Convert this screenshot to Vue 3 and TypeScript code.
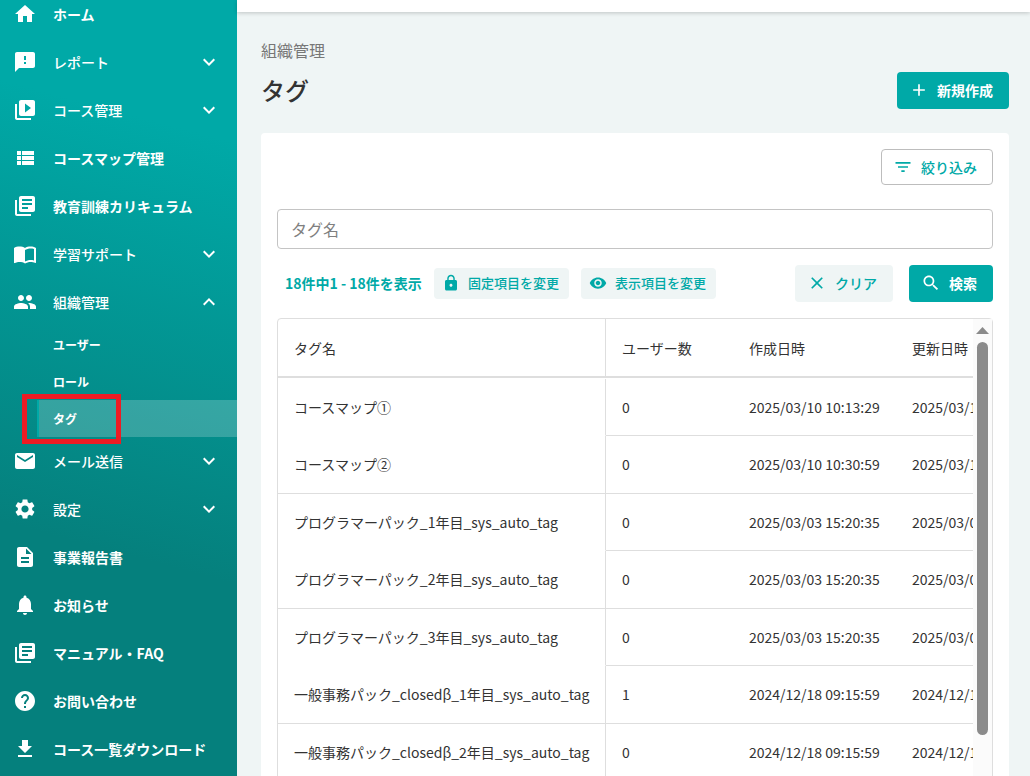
<script setup lang="ts">
interface NavItem {
  label: string
  icon: string
  state?: 'closed' | 'open'
  children?: string[]
}

const icons: Record<string, string> = {
  home: 'M10 20v-6h4v6h5v-8h3L12 3 2 12h3v8z',
  report: 'M20 2H4c-1.1 0-2 .9-2 2v18l4-4h14c1.1 0 2-.9 2-2V4c0-1.1-.9-2-2-2zm-7 12h-2v-2h2v2zm0-4h-2V6h2v4z',
  video: 'M4 6H2v14c0 1.1.9 2 2 2h14v-2H4V6zm16-4H8c-1.1 0-2 .9-2 2v12c0 1.1.9 2 2 2h12c1.1 0 2-.9 2-2V4c0-1.1-.9-2-2-2zm-8 12.5v-9l6 4.5-6 4.5z',
  list: 'M4 14h4v-4H4v4zm0 5h4v-4H4v4zM4 9h4V5H4v4zm5 5h12v-4H9v4zm0 5h12v-4H9v4zM9 5v4h12V5H9z',
  library: 'M4 6H2v14c0 1.1.9 2 2 2h14v-2H4V6zm16-4H8c-1.1 0-2 .9-2 2v12c0 1.1.9 2 2 2h12c1.1 0 2-.9 2-2V4c0-1.1-.9-2-2-2zm-1 9H9V9h10v2zm-4 4H9v-2h6v2zm4-8H9V5h10v2z',
  book: 'M21 5c-1.11-.35-2.33-.5-3.5-.5-1.95 0-4.05.4-5.5 1.5-1.45-1.1-3.55-1.5-5.5-1.5S2.45 4.9 1 6v14.65c0 .25.25.5.5.5.1 0 .15-.05.25-.05C3.1 20.45 5.05 20 6.5 20c1.95 0 4.05.4 5.5 1.5 1.35-.85 3.8-1.5 5.5-1.5 1.65 0 3.35.3 4.75 1.05.1.05.15.05.25.05.25 0 .5-.25.5-.5V6c-.6-.45-1.25-.75-2-1zm0 13.5c-1.1-.35-2.3-.5-3.5-.5-1.7 0-4.15.65-5.5 1.5V8c1.35-.85 3.8-1.5 5.5-1.5 1.2 0 2.4.15 3.5.5v11.5z',
  people: 'M16 11c1.66 0 2.99-1.34 2.99-3S17.66 5 16 5c-1.66 0-3 1.34-3 3s1.34 3 3 3zm-8 0c1.66 0 2.99-1.34 2.99-3S9.66 5 8 5C6.34 5 5 6.34 5 8s1.34 3 3 3zm0 2c-2.33 0-7 1.17-7 3.5V19h14v-2.5c0-2.33-4.67-3.5-7-3.5zm8 0c-.29 0-.62.02-.97.05 1.16.84 1.97 1.97 1.97 3.45V19h6v-2.5c0-2.33-4.67-3.5-7-3.5z',
  mail: 'M20 4H4c-1.1 0-1.99.9-1.99 2L2 18c0 1.1.9 2 2 2h16c1.1 0 2-.9 2-2V6c0-1.1-.9-2-2-2zm0 4l-8 5-8-5V6l8 5 8-5v2z',
  settings: 'M19.14 12.94c.04-.3.06-.61.06-.94 0-.32-.02-.64-.07-.94l2.03-1.58c.18-.14.23-.41.12-.61l-1.92-3.32c-.12-.22-.37-.29-.59-.22l-2.39.96c-.5-.38-1.03-.7-1.62-.94l-.36-2.54c-.04-.24-.24-.41-.48-.41h-3.84c-.24 0-.43.17-.47.41l-.36 2.54c-.59.24-1.13.57-1.62.94l-2.39-.96c-.22-.08-.47 0-.59.22L2.74 8.87c-.12.21-.08.47.12.61l2.03 1.58c-.05.3-.09.63-.09.94s.02.64.07.94l-2.03 1.58c-.18.14-.23.41-.12.61l1.92 3.32c.12.22.37.29.59.22l2.39-.96c.5.38 1.03.7 1.62.94l.36 2.54c.05.24.24.41.48.41h3.84c.24 0 .44-.17.47-.41l.36-2.54c.59-.24 1.13-.56 1.62-.94l2.39.96c.22.08.47 0 .59-.22l1.92-3.32c.12-.22.07-.47-.12-.61l-2.01-1.58zM12 15.6c-1.98 0-3.6-1.62-3.6-3.6s1.62-3.6 3.6-3.6 3.6 1.62 3.6 3.6-1.62 3.6-3.6 3.6z',
  doc: 'M14 2H6c-1.1 0-1.99.9-1.99 2L4 20c0 1.1.89 2 1.99 2H18c1.1 0 2-.9 2-2V8l-6-6zm2 16H8v-2h8v2zm0-4H8v-2h8v2zm-3-5V3.500L18.500 9H13z',
  bell: 'M12 22c1.100 0 2-.9 2-2h-4c0 1.100.89 2 2 2zm6-6v-5c0-3.070-1.640-5.640-4.500-6.320V4c0-.83-.67-1.500-1.500-1.500s-1.500.67-1.500 1.500v.68C7.630 5.360 6 7.920 6 11v5l-2 2v1h16v-1l-2-2z',
  help: 'M12 2C6.480 2 2 6.480 2 12s4.480 10 10 10 10-4.480 10-10S17.520 2 12 2zm1 17h-2v-2h2v2zm2.070-7.750l-.9.92C13.450 12.900 13 13.500 13 15h-2v-.5c0-1.100.45-2.100 1.170-2.830l1.240-1.260c.37-.36.59-.86.59-1.410 0-1.100-.9-2-2-2s-2 .9-2 2H8c0-2.210 1.790-4 4-4s4 1.790 4 4c0 .88-.36 1.680-.93 2.250z',
  download: 'M19 9h-4V3H9v6H5l7 7 7-7zM5 18v2h14v-2H5z',
  add: 'M19 13h-6v6h-2v-6H5v-2h6V5h2v6h6v2z',
  filter: 'M10 18h4v-2h-4v2zM3 6v2h18V6H3zm3 7h12v-2H6v2z',
  lock: 'M18 8h-1V6c0-2.760-2.240-5-5-5S7 3.240 7 6v2H6c-1.100 0-2 .9-2 2v10c0 1.100.9 2 2 2h12c1.100 0 2-.9 2-2V10c0-1.100-.9-2-2-2zm-6 9c-1.100 0-2-.9-2-2s.9-2 2-2 2 .9 2 2-.9 2-2 2zm3.100-9H8.900V6c0-1.710 1.390-3.100 3.100-3.100 1.710 0 3.100 1.390 3.100 3.100v2z',
  eye: 'M12 4.500C7 4.500 2.730 7.610 1 12c1.730 4.390 6 7.500 11 7.500s9.270-3.110 11-7.500c-1.730-4.390-6-7.500-11-7.500zM12 17c-2.760 0-5-2.240-5-5s2.240-5 5-5 5 2.240 5 5-2.240 5-5 5zm0-8c-1.660 0-3 1.340-3 3s1.340 3 3 3 3-1.340 3-3-1.340-3-3-3z',
  close: 'M19 6.410L17.590 5 12 10.590 6.410 5 5 6.410 10.590 12 5 17.590 6.410 19 12 13.410 17.590 19 19 17.590 13.410 12z',
  search: 'M15.500 14h-.79l-.28-.27C15.410 12.590 16 11.110 16 9.500 16 5.910 13.090 3 9.500 3S3 5.910 3 9.500 5.910 16 9.500 16c1.610 0 3.090-.59 4.230-1.570l.27.28v.79l5 4.990L20.490 19l-4.990-5zm-6 0C7.010 14 5 11.990 5 9.500S7.010 5 9.500 5 14 7.010 14 9.500 11.990 14 9.500 14z',
  down: 'M16.590 8.590L12 13.170 7.410 8.590 6 10l6 6 6-6z',
  up: 'M12 8l-6 6 1.410 1.410L12 10.830l4.590 4.580L18 14z',
}

const nav: NavItem[] = [
  { label: 'ホーム', icon: 'home' },
  { label: 'レポート', icon: 'report', state: 'closed' },
  { label: 'コース管理', icon: 'video', state: 'closed' },
  { label: 'コースマップ管理', icon: 'list' },
  { label: '教育訓練カリキュラム', icon: 'library' },
  { label: '学習サポート', icon: 'book', state: 'closed' },
  { label: '組織管理', icon: 'people', state: 'open', children: ['ユーザー', 'ロール', 'タグ'] },
  { label: 'メール送信', icon: 'mail', state: 'closed' },
  { label: '設定', icon: 'settings', state: 'closed' },
  { label: '事業報告書', icon: 'doc' },
  { label: 'お知らせ', icon: 'bell' },
  { label: 'マニュアル・FAQ', icon: 'library' },
  { label: 'お問い合わせ', icon: 'help' },
  { label: 'コース一覧ダウンロード', icon: 'download' },
]

const columns: string[] = ['タグ名', 'ユーザー数', '作成日時', '更新日時']

const rows: string[][] = [
  ['コースマップ①', '0', '2025/03/10 10:13:29', '2025/03/10 10:13:29'],
  ['コースマップ②', '0', '2025/03/10 10:30:59', '2025/03/10 10:30:59'],
  ['プログラマーパック_1年目_sys_auto_tag', '0', '2025/03/03 15:20:35', '2025/03/03 15:20:35'],
  ['プログラマーパック_2年目_sys_auto_tag', '0', '2025/03/03 15:20:35', '2025/03/03 15:20:35'],
  ['プログラマーパック_3年目_sys_auto_tag', '0', '2025/03/03 15:20:35', '2025/03/03 15:20:35'],
  ['一般事務パック_closedβ_1年目_sys_auto_tag', '1', '2024/12/18 09:15:59', '2024/12/18 09:15:59'],
  ['一般事務パック_closedβ_2年目_sys_auto_tag', '0', '2024/12/18 09:15:59', '2024/12/18 09:15:59'],
]
</script>

<template>
  <div class="app">
    <nav class="sidebar">
      <template v-for="item in nav" :key="item.label">
        <div class="nav-item" :class="{ group: item.state }">
          <svg class="nav-icon" viewBox="0 0 24 24"><path :d="icons[item.icon]" /></svg>
          <span class="nav-label">{{ item.label }}</span>
          <svg v-if="item.state" class="chevron" viewBox="0 0 24 24">
            <path :d="item.state === 'open' ? icons.up : icons.down" />
          </svg>
        </div>
        <div
          v-for="child in item.children ?? []"
          :key="child"
          class="sub-item"
          :class="{ active: child === 'タグ' }"
        >
          {{ child }}
          <span v-if="child === 'タグ'" class="highlight"></span>
        </div>
      </template>
    </nav>

    <main class="main">
      <header class="topbar"></header>
      <div class="content">
        <div class="crumb">組織管理</div>
        <div class="title-row">
          <h1>タグ</h1>
          <button class="btn primary create">
            <svg class="i20" viewBox="0 0 24 24"><path :d="icons.add" /></svg>新規作成
          </button>
        </div>

        <section class="card">
          <div class="filter-row">
            <button class="btn outline">
              <svg class="i20" viewBox="0 0 24 24"><path :d="icons.filter" /></svg>絞り込み
            </button>
          </div>
          <input class="field" type="text" placeholder="タグ名" />
          <div class="tools">
            <span class="count">18件中1 - 18件を表示</span>
            <button class="btn chip">
              <svg class="i18" viewBox="0 0 24 24"><path :d="icons.lock" /></svg>固定項目を変更
            </button>
            <button class="btn chip">
              <svg class="i18" viewBox="0 0 24 24"><path :d="icons.eye" /></svg>表示項目を変更
            </button>
            <button class="btn soft clear">
              <svg class="i20" viewBox="0 0 24 24"><path :d="icons.close" /></svg>クリア
            </button>
            <button class="btn primary search">
              <svg class="i20" viewBox="0 0 24 24"><path :d="icons.search" /></svg>検索
            </button>
          </div>

          <div class="table-box">
            <div class="table">
              <div class="tr head">
                <div v-for="col in columns" :key="col" class="cell">{{ col }}</div>
              </div>
              <div class="body">
                <div v-for="row in rows" :key="row[0]" class="tr">
                  <div v-for="(value, i) in row" :key="i" class="cell">{{ value }}</div>
                </div>
              </div>
            </div>
            <div class="scrollbar">
              <span class="arrow"></span>
              <span class="thumb"></span>
            </div>
          </div>
        </section>
      </div>
    </main>
  </div>
</template>

<style>
body {
  margin: 0;
  overflow: hidden;
}
</style>

<style scoped>
* {
  box-sizing: border-box;
}
.app {
  display: flex;
  width: 1030px;
  height: 776px;
  overflow: hidden;
  background: #eff5f5;
  color: #333;
  font-family: "Noto Sans CJK JP", "Noto Sans", sans-serif;
  font-size: 14px;
  line-height: 20px;
}
svg {
  display: block;
  flex: none;
  fill: currentColor;
}
.sidebar {
  flex: none;
  width: 237px;
  height: 786px;
  margin-top: -10px;
  color: #fff;
  background: linear-gradient(195deg, #00a9a7 18%, #05807d 70%);
}
.nav-item {
  display: flex;
  align-items: center;
  height: 48px;
  padding: 0 16px 0 13px;
  font-weight: 700;
}
.nav-item.group {
  font-weight: 500;
}
.nav-icon {
  width: 24px;
  height: 24px;
  margin-right: 16px;
}
.nav-label {
  flex: 1;
}
.chevron {
  width: 24px;
  height: 24px;
}
.sub-item {
  position: relative;
  display: flex;
  align-items: center;
  height: 37px;
  margin-left: 37px;
  padding-left: 16px;
  font-size: 12px;
  font-weight: 700;
}
.sub-item.active {
  padding-left: 14px;
  border-left: 2px solid #00a9a7;
  background: rgba(255, 255, 255, 0.2);
  background-clip: padding-box;
}
.highlight {
  position: absolute;
  left: -17px;
  top: -6px;
  width: 99px;
  height: 50px;
  border: 5px solid #ed1c24;
}
.main {
  flex: 1;
  min-width: 0;
}
.topbar {
  height: 12px;
  background: #fff;
  box-shadow: 0 1px 4px rgba(0, 0, 0, 0.2);
}
.content {
  padding: 27px 21px 0 24px;
}
.crumb {
  height: 24px;
  font-size: 16px;
  line-height: 22px;
  color: #777;
}
.title-row {
  display: flex;
  align-items: center;
  justify-content: space-between;
  height: 37px;
  margin-top: 9px;
}
h1 {
  margin: 0 0 2px;
  font-size: 24px;
  font-weight: 500;
  line-height: 36px;
}
.btn {
  display: flex;
  align-items: center;
  height: 37px;
  padding: 0 0 1px;
  border: 0;
  border-radius: 4px;
  font: inherit;
  font-weight: 500;
  color: #00a9a7;
  background: #eff5f5;
  white-space: nowrap;
}
.btn.primary {
  color: #fff;
  font-weight: 700;
  background: #00a9a7;
}
.i20 {
  width: 20px;
  height: 20px;
  margin-right: 8px;
}
.i18 {
  width: 18px;
  height: 18px;
  margin-right: 8px;
}
.create {
  width: 112px;
  padding-left: 12px;
}
.card {
  height: 700px;
  margin-top: 24px;
  padding: 16px;
  border-radius: 4px;
  background: #fff;
}
.filter-row {
  display: flex;
  justify-content: flex-end;
}
.btn.outline {
  width: 112px;
  height: 36px;
  padding: 0 0 0 11px;
  border: 1px solid #bdbdbd;
  background: #fff;
}
.field {
  display: block;
  width: 100%;
  height: 40px;
  margin-top: 24px;
  padding: 0 13px;
  border: 1px solid #c4c4c4;
  border-radius: 4px;
  background: #fff;
  font: inherit;
  font-size: 16px;
}
.field::placeholder {
  color: #808080;
  opacity: 1;
}
.tools {
  display: flex;
  align-items: center;
  height: 37px;
  margin-top: 16px;
}
.count {
  width: 149px;
  margin-left: 8px;
  padding-bottom: 1px;
  color: #00a9a7;
  font-weight: 700;
  white-space: nowrap;
}
.chip {
  width: 135px;
  height: 31px;
  margin-right: 12px;
  padding-left: 8px;
  font-size: 13px;
}
.clear {
  width: 98px;
  margin-left: auto;
  padding-left: 12px;
}
.search {
  width: 84px;
  margin-left: 16px;
  padding-left: 12px;
}
.table-box {
  display: flex;
  height: 520px;
  margin-top: 16px;
  border: 1px solid #dedede;
  border-radius: 4px;
}
.table {
  flex: 1;
  min-width: 0;
  overflow: hidden;
}
.tr {
  display: grid;
  grid-template-columns: 328px 127px 163px 163px;
  height: 57.5px;
}
.cell {
  display: flex;
  align-items: center;
  padding: 0 16px;
  border-bottom: 1px solid #dedede;
  white-space: nowrap;
}
.cell:first-child {
  border-right: 1px solid #dedede;
}
.head {
  height: 59px;
}
.head .cell {
  border-bottom-width: 2px;
}
.body {
  padding-top: 0.5px;
}
.body .tr:nth-child(odd) .cell:first-child {
  border-bottom-color: transparent;
}
.scrollbar {
  display: flex;
  flex-direction: column;
  align-items: center;
  flex: none;
  width: 19px;
  padding-top: 8px;
  background: #fbfbfb;
}
.arrow {
  width: 13px;
  height: 7px;
  background: #8b8b8b;
  clip-path: polygon(50% 0, 100% 100%, 0 100%);
}
.thumb {
  width: 11px;
  height: 393px;
  margin-top: 8px;
  border-radius: 6px;
  background: #8b8b8b;
}
</style>
